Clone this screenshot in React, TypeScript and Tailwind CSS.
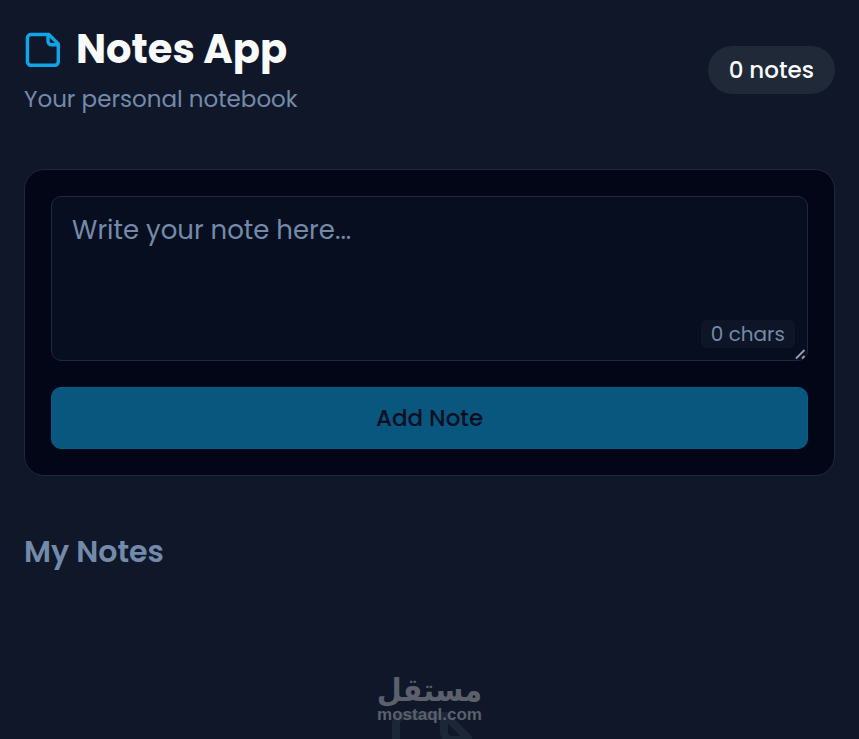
import { useState } from 'react';

interface NoteIconProps {
  className?: string;
}

function NoteIcon({ className }: NoteIconProps) {
  return (
    <svg
      viewBox="1 1 21 21"
      fill="none"
      stroke="currentColor"
      strokeWidth="2"
      strokeLinecap="round"
      strokeLinejoin="round"
      className={className}
      aria-hidden="true"
    >
      <path d="M15.5 3H5a2 2 0 0 0-2 2v14a2 2 0 0 0 2 2h14a2 2 0 0 0 2-2V8.5Z" />
      <path d="M15 3v4a2 2 0 0 0 2 2h4" />
    </svg>
  );
}

export default function App() {
  const [draft, setDraft] = useState('');
  const [notes, setNotes] = useState<string[]>([]);

  const canAdd = draft.trim().length > 0;

  const addNote = () => {
    if (!canAdd) return;
    setNotes((previous) => [draft.trim(), ...previous]);
    setDraft('');
  };

  return (
    <div className="h-screen overflow-hidden bg-[#0f1729] px-6 pt-6 font-[Poppins,Inter,sans-serif] text-slate-50">
      <header className="flex items-center justify-between">
        <div>
          <h1 className="flex items-center gap-4 text-[40px] leading-[50px] font-bold">
            <NoteIcon className="h-9 w-9 text-[#0fa5e9]" />
            Notes App
          </h1>
          <p className="mt-[9px] text-[23px] leading-8 text-[#748aaa]">Your personal notebook</p>
        </div>
        <span className="rounded-full bg-[#1f2937] px-[21px] py-2 text-[23px] leading-8 font-medium">
          {notes.length} notes
        </span>
      </header>

      <section className="mt-[54px] rounded-[20px] border border-[#1e293b] bg-[#020617] p-[26px]">
        <div className="relative">
          <textarea
            aria-label="Note"
            value={draft}
            onChange={(event) => setDraft(event.target.value)}
            placeholder="Write your note here..."
            className="block h-[165px] w-full resize-none rounded-[10px] border border-[#1e293b] bg-[#070e1f] px-5 py-[13px] text-[26px] leading-10 placeholder:text-[#748aaa]"
          />
          <span className="absolute right-[13px] bottom-[13px] rounded-md bg-[#0d1526] px-[10px] text-xl leading-7 text-[#748aaa]">
            {draft.length} chars
          </span>
          <svg
            viewBox="0 0 12 12"
            className="pointer-events-none absolute right-px bottom-px h-3 w-3 text-slate-400"
            fill="none"
            stroke="currentColor"
            strokeWidth="1.8"
            aria-hidden="true"
          >
            <path d="M1 10.5 9.5 2M7 10.5 9.5 8" />
          </svg>
        </div>
        <button
          type="button"
          onClick={addNote}
          disabled={!canAdd}
          className="mt-[26px] h-[62px] w-full rounded-[10px] border border-[#0b5c88] bg-[#09567f] text-[23px] font-medium text-[#0a1022]"
        >
          Add Note
        </button>
      </section>

      <h2 className="mt-14 text-[30px] leading-10 font-semibold text-[#748aaa]">My Notes</h2>

      {notes.length === 0 ? (
        <div className="relative mt-[136px] flex justify-center">
          <NoteIcon className="h-[84px] w-[84px] text-[#1b2636]" />
          <div className="absolute -top-8 flex flex-col items-center gap-px text-[#5b606b]">
            <span
              lang="ar"
              dir="rtl"
              className="font-['DejaVu_Sans_Condensed','DejaVu_Sans',sans-serif] text-[32px] leading-7 font-bold"
            >
              مستقل
            </span>
            <span className="font-['Liberation_Sans',sans-serif] text-[17px] leading-5 font-bold">mostaql.com</span>
          </div>
        </div>
      ) : (
        <ul className="mt-6 space-y-3">
          {notes.map((note, index) => (
            <li key={index} className="rounded-[10px] border border-[#1e293b] bg-[#020617] p-5 text-xl">
              {note}
            </li>
          ))}
        </ul>
      )}
    </div>
  );
}
